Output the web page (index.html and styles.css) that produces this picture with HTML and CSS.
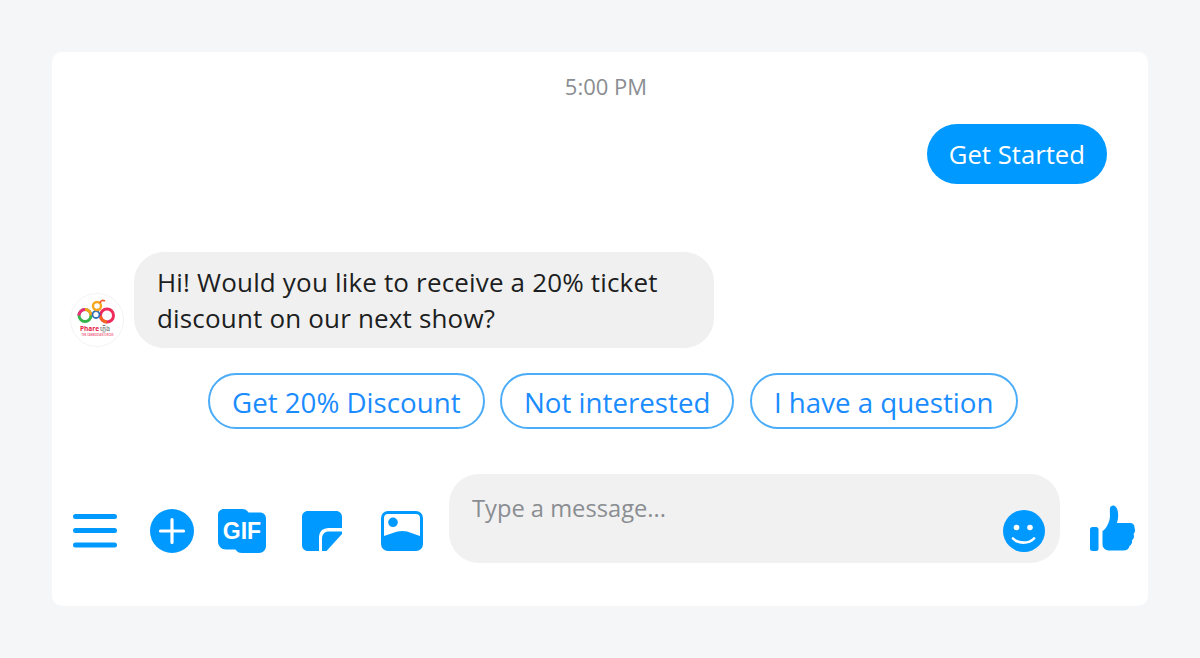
FILE: index.html
```html
<!DOCTYPE html>
<html lang="en">
<head>
    <meta charset="UTF-8">
    <title>Messenger chat</title>
    <link rel="stylesheet" href="styles.css">
</head>
<body>
    <div class="chat">
        <div class="time">5:00 PM</div>

        <div class="row-out">
            <div class="bubble-out">Get Started</div>
        </div>

        <div class="row-in">
            <div class="avatar">
                <svg width="54" height="54" viewBox="0 0 54 54">
                    <circle cx="27" cy="27" r="26.500" fill="#fff" stroke="#f3f3f3"/>
                    <g fill="none">
                        <circle cx="15" cy="22.500" r="6" stroke="#35b44a" stroke-width="3"/>
                        <path d="M15 16.500A6 6 0 0 0 9 22.500" stroke="#ee2c7b" stroke-width="3"/>
                        <path d="M15 16.500A6 6 0 0 1 21 22.500" stroke="#f7a51c" stroke-width="3"/>
                        <circle cx="37" cy="22.500" r="6.500" stroke="#ee2c5b" stroke-width="3"/>
                        <path d="M37 29A6.500 6.500 0 0 1 30.500 22.500" stroke="#f26522" stroke-width="3"/>
                        <circle cx="26" cy="21.500" r="3.500" stroke="#2b6fb8" stroke-width="1.800"/>
                        <circle cx="27" cy="13" r="4" stroke="#f7a51c" stroke-width="2.400"/>
                        <path d="M30 10C31 7 33 7 35 8" stroke="#f15a29" stroke-width="1.800"/>
                    </g>
                    <text x="10" y="38" class="logo-name">Phare</text>
                    <text x="30" y="38" class="logo-khmer">ភ្លើង</text>
                    <text x="27.500" y="43" text-anchor="middle" class="logo-tag">THE CAMBODIAN CIRCUS</text>
                </svg>
            </div>
            <div class="bubble-in">Hi! Would you like to receive a 20% ticket<br>discount on our next show?</div>
        </div>

        <div class="replies">
            <button class="reply">Get 20% Discount</button>
            <button class="reply">Not interested</button>
            <button class="reply">I have a question</button>
        </div>

        <div class="composer">
            <div class="tools">
                <!-- menu -->
                <svg class="tool-menu" width="44" height="34" viewBox="0 0 44 34">
                    <rect x="0" y="0" width="44" height="5" rx="2.500"/>
                    <rect x="0" y="14" width="44" height="5" rx="2.500"/>
                    <rect x="0" y="28.500" width="44" height="5" rx="2.500"/>
                </svg>
                <!-- plus -->
                <svg class="tool-plus" width="44" height="44" viewBox="0 0 44 44">
                    <circle cx="22" cy="22" r="22"/>
                    <path d="M22 10.500V33.500M10.500 22H33.500" stroke="#fff" stroke-width="3.200" stroke-linecap="round" fill="none"/>
                </svg>
                <!-- gif -->
                <svg class="tool-gif" width="48" height="44" viewBox="0 0 48 44">
                    <path d="M6 0H24C27 0 29 1 30.500 3.500H42C45.500 3.500 48 6 48 9.500V37C48 41 45 44 41 44H24C21 44 19 43 17.500 40.500H8C3.500 40.500 0 37 0 32.500V6C0 2.500 2.500 0 6 0Z"/>
                    <text x="24" y="30" text-anchor="middle" class="gif-label">GIF</text>
                </svg>
                <!-- sticker -->
                <svg class="tool-sticker" width="40" height="40" viewBox="0 0 40 40">
                    <path d="M6 0H34C37.500 0 40 2.500 40 6V17H27C20.500 17 17 20.500 17 27V40H6C2.500 40 0 37.500 0 34V6C0 2.500 2.500 0 6 0Z"/>
                    <path d="M20 40V28C20 23 22.500 20.500 27 20.500H40V23L24.500 40Z"/>
                </svg>
                <!-- photo -->
                <svg class="tool-photo" width="42" height="40" viewBox="0 0 42 40">
                    <rect width="42" height="40" rx="7"/>
                    <path d="M7 3H35C37.500 3 39 4.500 39 7V25C33 23.500 28 20 21.500 20C14.500 20 9 23.500 3 25V7C3 4.500 4.500 3 7 3Z" fill="#fff"/>
                    <circle cx="12" cy="11.300" r="4.800"/>
                </svg>
            </div>

            <div class="input">
                <span class="placeholder">Type a message...</span>
                <svg class="smile" width="42" height="42" viewBox="0 0 42 42">
                    <circle cx="21" cy="21" r="21"/>
                    <circle cx="13.500" cy="17.500" r="2.800" fill="#fff"/>
                    <circle cx="27" cy="17.500" r="2.800" fill="#fff"/>
                    <path d="M10 28.500C15 34 26 34 31 28.500" fill="none" stroke="#fff" stroke-width="2.600" stroke-linecap="round"/>
                </svg>
            </div>

            <svg class="like" width="45" height="46" viewBox="0 0 45 46">
                <rect x="0" y="22" width="8.500" height="24" rx="2.500"/>
                <path d="M12.500 26C15 25 18 20 19.500 15C20.500 11 19.500 6 20 3C20.500 0.500 23.500 -0.500 25.500 1.500C28 4 28.500 9 28 13C27.800 15 27.300 16.500 27 18H40C43 18 44.800 20 44.500 23C45.500 25 45 28 43.500 29C44.500 31 44 34 42 35C42.500 37.500 41.500 40 39.500 41C39 44 36.500 45.500 33 45.500H20C15 45.500 12.500 43 12.500 39Z"/>
            </svg>
        </div>
    </div>
</body>
</html>
```

FILE: styles.css
```css
* {
    box-sizing: border-box;
}

body {
    margin: 0;
    height: 658px;
    padding: 52px;
    background-color: #f5f6f8;
    font-family: "Open Sans", "Noto Sans", sans-serif;
}

.chat {
    height: 554px;
    padding: 21px 12px 0 18px;
    background-color: #fff;
    border-radius: 10px;
}

.time {
    height: 26px;
    padding-left: 6px;
    text-align: center;
    font-size: 22px;
    line-height: 26px;
    color: #8a8d91;
}

.row-out {
    display: flex;
    justify-content: flex-end;
    margin-top: 25px;
    padding-right: 29px;
}

.bubble-out {
    height: 60px;
    padding: 0 22px;
    background-color: #0099ff;
    border-radius: 30px;
    color: #fff;
    font-size: 25.700px;
    line-height: 62px;
}

.row-in {
    display: flex;
    align-items: flex-end;
    gap: 10px;
    margin-top: 68px;
}

.avatar {
    width: 54px;
    height: 54px;
    margin-bottom: 1px;
}

.logo-name {
    font-size: 6.500px;
    font-weight: 700;
    fill: #e5173f;
}

.logo-khmer {
    font-family: "Liberation Sans", sans-serif;
    font-size: 6.500px;
    fill: #555;
}

.logo-tag {
    font-size: 2.600px;
    font-weight: 700;
    fill: #ef6a86;
}

.bubble-in {
    width: 580px;
    height: 96px;
    padding: 12px 23px;
    background-color: #f0f0f0;
    border-radius: 30px;
    color: #1c1e21;
    font-size: 26px;
    letter-spacing: 0.170px;
    line-height: 36px;
}

.replies {
    display: flex;
    gap: 15.500px;
    margin-top: 25px;
    padding-left: 138px;
}

.reply {
    height: 56px;
    padding: 2px 22px 0;
    background-color: #fff;
    border: 2px solid #4bacf8;
    border-radius: 28px;
    color: #1a8cff;
    font-family: inherit;
    font-size: 27.700px;
}

.composer {
    display: flex;
    align-items: flex-end;
    margin-top: 45px;
}

.tools {
    display: flex;
    align-items: center;
    height: 64px;
    margin-right: 26px;
}

.tools svg {
    fill: #0099ff;
}

.tool-menu {
    margin: 0 33px 0 2.500px;
}

.tool-plus {
    margin-right: 24px;
}

.tool-gif {
    margin-right: 36px;
}

.tool-sticker {
    margin-right: 39.500px;
}

.gif-label {
    font-family: "Liberation Sans", sans-serif;
    font-size: 23px;
    font-weight: 700;
    fill: #fff;
}

.input {
    position: relative;
    width: 611px;
    height: 89px;
    flex-shrink: 0;
    padding: 20px 23px;
    background-color: #f1f1f1;
    border-radius: 30px;
}

.placeholder {
    display: block;
    font-size: 23.700px;
    line-height: 28px;
    color: #8a8d91;
}

.smile {
    position: absolute;
    right: 15px;
    bottom: 11.500px;
    fill: #0099ff;
}

.like {
    margin: 0 0 12px 30px;
    fill: #0099ff;
}
```
